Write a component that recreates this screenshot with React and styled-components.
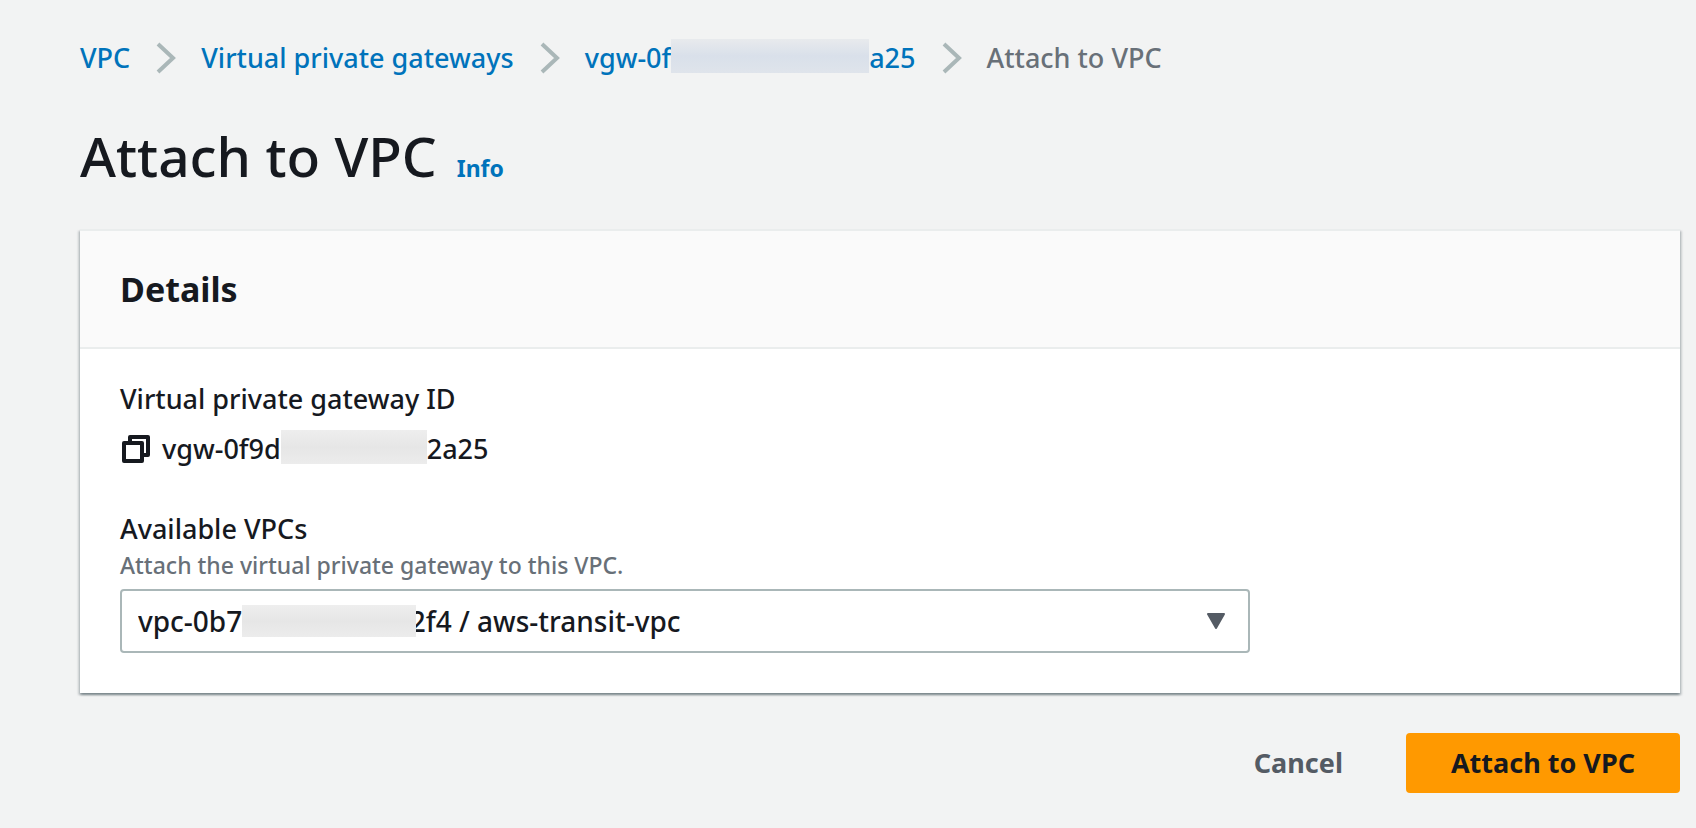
import React, { useState } from 'react';
import styled, { createGlobalStyle } from 'styled-components';


// non-breaking gap in the option text, covered by the mask
const gap = '\u00a0'.repeat(23);

const options = [
  { value: 'transit', label: `vpc-0b7${gap}2f4 / aws-transit-vpc` },
];

function Chevron() {
  return (
    <ChevronIcon viewBox='0 0 20 32' aria-hidden='true'>
      <path d='M2 2 L17 16 L2 30' />
    </ChevronIcon>
  );
}

function App() {
  const [vpc, setVpc] = useState('transit');

  return (
    <Page>
      <GlobalStyle />
      <Breadcrumbs aria-label='Breadcrumbs'>
        <ol>
          <li><Link href='#vpc'>VPC</Link><Chevron /></li>
          <li><Link href='#gateways'>Virtual private gateways</Link><Chevron /></li>
          <li>
            <Link href='#gateway'>vgw-0f<Mask $width={198} $tone='blue' />a25</Link>
            <Chevron />
          </li>
          <li aria-current='page'>Attach to VPC</li>
        </ol>
      </Breadcrumbs>

      <Heading>
        <h1>Attach to VPC</h1>
        <InfoLink href='#info'>Info</InfoLink>
      </Heading>

      <Card>
        <CardHeader><h2>Details</h2></CardHeader>
        <CardBody>
          <Field>
            <Label as='div'>Virtual private gateway ID</Label>
            <GatewayId>
              <CopyButton aria-label='Copy gateway ID'>
                <svg viewBox='0 0 28 28' aria-hidden='true'>
                  <path d='M8 6V2H26V20H22' />
                  <path d='M2 8H20V26H2Z' />
                </svg>
              </CopyButton>
              <IdText>vgw-0f9d<Mask $width={146} />2a25</IdText>
            </GatewayId>
          </Field>
          <Field>
            <Label htmlFor='vpc'>Available VPCs</Label>
            <Description id='vpc-help'>Attach the virtual private gateway to this VPC.</Description>
            <SelectBox>
              <select id='vpc' aria-describedby='vpc-help' value={vpc} onChange={(e) => setVpc(e.target.value)}>
                {options.map((option) => (
                  <option key={option.value} value={option.value}>{option.label}</option>
                ))}
              </select>
              <SelectMask />
              <svg viewBox='0 0 20 16' aria-hidden='true'>
                <path d='M2 1H18L10 15Z' />
              </svg>
            </SelectBox>
          </Field>
        </CardBody>
      </Card>

      <Actions>
        <Button>Cancel</Button>
        <Button $primary>Attach to VPC</Button>
      </Actions>
    </Page>
  );
}

export default App;

const GlobalStyle = createGlobalStyle`
  *{
    box-sizing: border-box;
  }
  body{
    margin: 0;
    background-color: #f2f3f3;
    color: #16191f;
    font-family: 'Noto Sans', 'Open Sans', sans-serif;
    font-size: 27px;
    font-weight: 500;
    line-height: 40px;
  }
  h1, h2, p, ol{
    margin: 0;
    padding: 0;
  }
`;

const Page = styled.main`
  padding: 38px 16px 36px 80px;
`;

const Breadcrumbs = styled.nav`
  color: #687078;

  ol{
    display: flex;
    list-style: none;
  }
  li{
    display: flex;
    align-items: center;
  }
`;

const Link = styled.a`
  display: flex;
  align-items: center;
  color: #0073bb;
  text-decoration: none;
`;

const ChevronIcon = styled.svg`
  width: 20px;
  height: 32px;
  margin: 0 25px 0 26px;
  fill: none;
  stroke: #aab7b8;
  stroke-width: 4;
`;

const Mask = styled.span`
  width: ${(props) => props.$width}px;
  height: 34px;
  margin-bottom: 4px;
  background: ${(props) => props.$tone === 'blue'
    ? 'linear-gradient(#e8eaed, #d9e0ea 50%, #dfe4eb)'
    : 'linear-gradient(#eeeeee, #e6e6e6 50%, #ececec)'};
`;

const Heading = styled.header`
  display: flex;
  align-items: baseline;
  gap: 20px;
  margin-top: 38px;

  h1{
    font-size: 55px;
    font-weight: 500;
    line-height: 80px;
  }
`;

const InfoLink = styled.a`
  color: #0073bb;
  font-size: 23px;
  font-weight: 700;
  text-decoration: none;
`;

const Card = styled.section`
  margin-top: 33px;
  background-color: #fff;
  border-top: 2px solid #eaeded;
  box-shadow: 0 2px 2px rgba(0, 28, 36, .3), 2px 2px 2px rgba(0, 28, 36, .15), -2px 2px 2px rgba(0, 28, 36, .15);
`;

const CardHeader = styled.div`
  padding: 36px 40px;
  background-color: #fafafa;
  border-bottom: 2px solid #eaeded;

  h2{
    font-size: 34px;
    font-weight: 700;
    line-height: 44px;
  }
`;

const CardBody = styled.div`
  display: flex;
  flex-direction: column;
  gap: 40px;
  padding: 30px 40px 40px;
`;

const Field = styled.div`
  display: flex;
  flex-direction: column;
`;

const Label = styled.label`
  font-size: 27px;
`;

const GatewayId = styled.div`
  display: flex;
  align-items: center;
  gap: 12px;
  margin-top: 10px;
`;

const IdText = styled.div`
  display: flex;
  align-items: center;
`;

const CopyButton = styled.button`
  display: flex;
  padding: 0 0 0 2px;
  border: none;
  background: none;
  cursor: pointer;

  svg{
    width: 28px;
    height: 28px;
    fill: none;
    stroke: #16191f;
    stroke-width: 4;
    stroke-linejoin: round;
  }
`;

const Description = styled.p`
  color: #687078;
  font-size: 23px;
  line-height: 32px;
`;

const SelectBox = styled.div`
  position: relative;
  display: flex;
  align-items: center;
  width: calc(75% - 10px);
  margin-top: 8px;

  select{
    width: 100%;
    height: 64px;
    padding: 0 80px 0 16px;
    border: 2px solid #aab7b8;
    border-radius: 4px;
    background-color: #fff;
    color: #16191f;
    font: inherit;
    font-size: 28px;
    appearance: none;
  }
  svg{
    position: absolute;
    right: 24px;
    width: 20px;
    height: 16px;
    fill: #545b64;
    stroke: #545b64;
    stroke-width: 2;
    stroke-linejoin: round;
    pointer-events: none;
  }
`;

const SelectMask = styled.span`
  position: absolute;
  left: 122px;
  width: 174px;
  height: 32px;
  background: linear-gradient(#eeeeee, #e6e6e6 50%, #ececec);
  pointer-events: none;
`;

const Actions = styled.div`
  display: flex;
  justify-content: flex-end;
  gap: 18px;
  margin-top: 40px;
`;

const Button = styled.button`
  height: 60px;
  padding: 0 45px;
  border: none;
  border-radius: 4px;
  background-color: ${(props) => (props.$primary ? '#ff9900' : 'transparent')};
  color: ${(props) => (props.$primary ? '#16191f' : '#545b64')};
  font: inherit;
  font-weight: 700;
  cursor: pointer;
`;
